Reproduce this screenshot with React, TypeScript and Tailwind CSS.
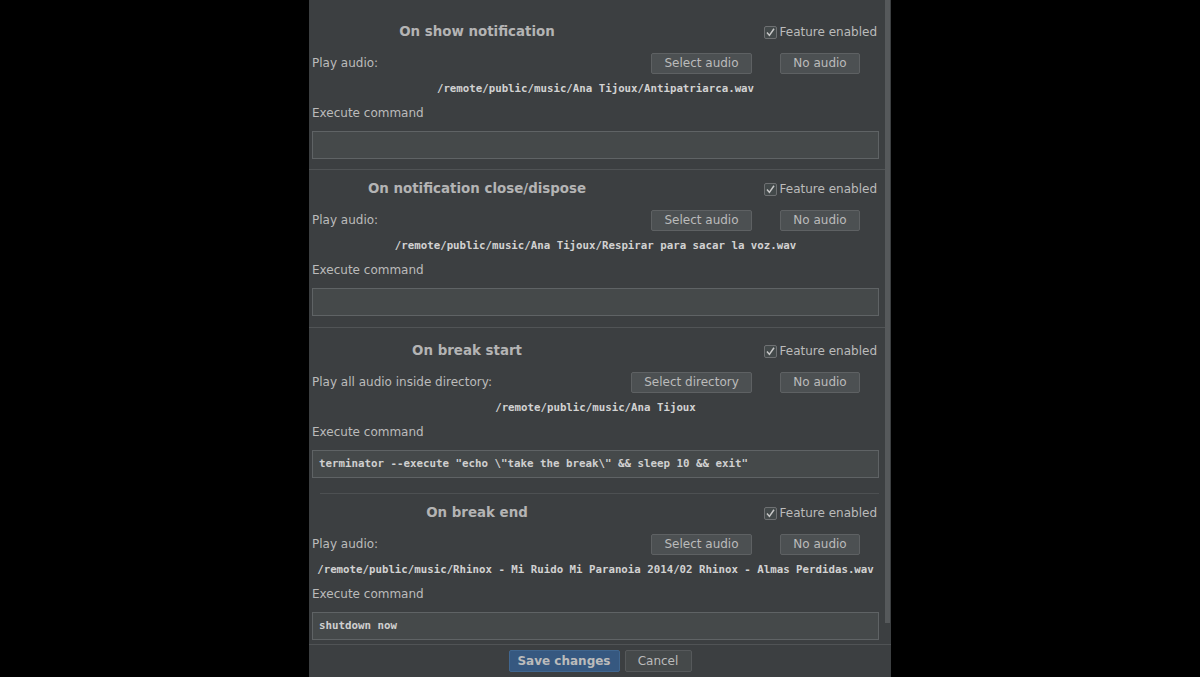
import React from "react";

const ui = { fontFamily: '"DejaVu Sans", "Liberation Sans", sans-serif' };
const mono = { fontFamily: '"DejaVu Sans Mono", "Liberation Mono", monospace' };

function Check() {
  return (
    <div className="flex items-center">
      <div className="w-[13px] h-[13px] border border-[#6e7072] bg-[#43494a] rounded-[2px] flex items-center justify-center">
        <svg width="11" height="11" viewBox="0 0 11 11">
          <path d="M2 5.6 L4.4 8.4 L9 1.8" fill="none" stroke="#c8c8c8" strokeWidth="1.5" />
        </svg>
      </div>
      <span className="ml-[3px] text-[12px] text-[#bbbbbb]" style={ui}>Feature enabled</span>
    </div>
  );
}

function Btn({ w, children }: { w: string; children: React.ReactNode }) {
  return (
    <div
      className={`${w} h-[21px] flex items-center justify-center bg-[#4c5052] border border-[#5e6163] rounded-[2px] text-[12px] text-[#bbbbbb]`}
      style={ui}
    >
      {children}
    </div>
  );
}

function Section({
  title,
  titleW,
  label,
  selectLabel,
  selectW,
  path,
  command,
}: {
  title: string;
  titleW: string;
  label: string;
  selectLabel: string;
  selectW: string;
  path: string;
  command: string;
}) {
  return (
    <div className="flex flex-col pl-[3px] pr-[6px]">
      <div className="flex items-center h-[22px]">
        <div className={`${titleW} text-center text-[13.4px] font-bold text-[#b4b4b4]`} style={ui}>
          {title}
        </div>
        <div className="ml-auto mr-[2px]">
          <Check />
        </div>
      </div>
      <div className="flex items-center h-[22px] mt-[9px]">
        <span className="text-[12px] text-[#bbbbbb]" style={ui}>{label}</span>
        <div className="ml-auto flex items-center gap-[28px] mr-[19px]">
          <Btn w={selectW}>{selectLabel}</Btn>
          <Btn w="w-[80px]">No audio</Btn>
        </div>
      </div>
      <div className="flex items-center justify-center h-[16px] mt-[7px]">
        <span className="text-[10.75px] font-bold text-[#d2d2d2] whitespace-pre" style={mono}>{path}</span>
      </div>
      <div className="flex items-center h-[16px] mt-[8px]">
        <span className="text-[12px] text-[#bbbbbb]" style={ui}>Execute command</span>
      </div>
      <div className="h-[28px] mt-[10px] bg-[#45494a] border border-[#5f6365] flex items-center px-[6px]">
        <span className="text-[10.8px] font-bold text-[#d0d0d0] whitespace-pre" style={mono}>{command}</span>
      </div>
    </div>
  );
}

export default function App() {
  return (
    <div className="w-[1200px] h-[677px] bg-black flex justify-center overflow-hidden">
      <div className="w-[582px] h-full bg-[#3c3f41] flex flex-col">
        <div className="flex h-[644px]">
          <div className="w-[576px] flex flex-col pt-[21px]">
            <Section
              title="On show notification"
              titleW="w-[330px]"
              label="Play audio:"
              selectLabel="Select audio"
              selectW="w-[101px]"
              path="/remote/public/music/Ana Tijoux/Antipatriarca.wav"
              command=""
            />
            <div className="mt-[10px] h-px bg-[#505355]" />
            <div className="mt-[8px]">
              <Section
                title="On notification close/dispose"
                titleW="w-[330px]"
                label="Play audio:"
                selectLabel="Select audio"
                selectW="w-[101px]"
                path="/remote/public/music/Ana Tijoux/Respirar para sacar la voz.wav"
                command=""
              />
            </div>
            <div className="mt-[11px] h-px bg-[#515456]" />
            <div className="mt-[12px]">
              <Section
                title="On break start"
                titleW="w-[310px]"
                label="Play all audio inside directory:"
                selectLabel="Select directory"
                selectW="w-[121px]"
                path="/remote/public/music/Ana Tijoux"
                command={'terminator --execute "echo \\"take the break\\" && sleep 10 && exit"'}
              />
            </div>
            <div className="mt-[15px] ml-[11px] mr-[6px] h-px bg-[#4d5052]" />
            <div className="mt-[8px]">
              <Section
                title="On break end"
                titleW="w-[330px]"
                label="Play audio:"
                selectLabel="Select audio"
                selectW="w-[101px]"
                path="/remote/public/music/Rhinox - Mi Ruido Mi Paranoia 2014/02 Rhinox - Almas Perdidas.wav"
                command="shutdown now"
              />
            </div>
          </div>
          <div className="w-[6px] flex flex-col">
            <div className="w-[5px] h-[623px] bg-[#56595b]" />
          </div>
        </div>
        <div className="h-px bg-[#505355]" />
        <div className="flex-1 flex items-center justify-center gap-[5px]">
          <div
            className="w-[111px] h-[22px] flex items-center justify-center bg-[#365880] border border-[#40668f] rounded-[2px] text-[12px] font-bold text-[#bbbbbb]"
            style={ui}
          >
            Save changes
          </div>
          <div
            className="w-[67px] h-[22px] flex items-center justify-center bg-[#45494a] border border-[#56595b] rounded-[2px] text-[12px] text-[#bbbbbb]"
            style={ui}
          >
            Cancel
          </div>
        </div>
      </div>
    </div>
  );
}
